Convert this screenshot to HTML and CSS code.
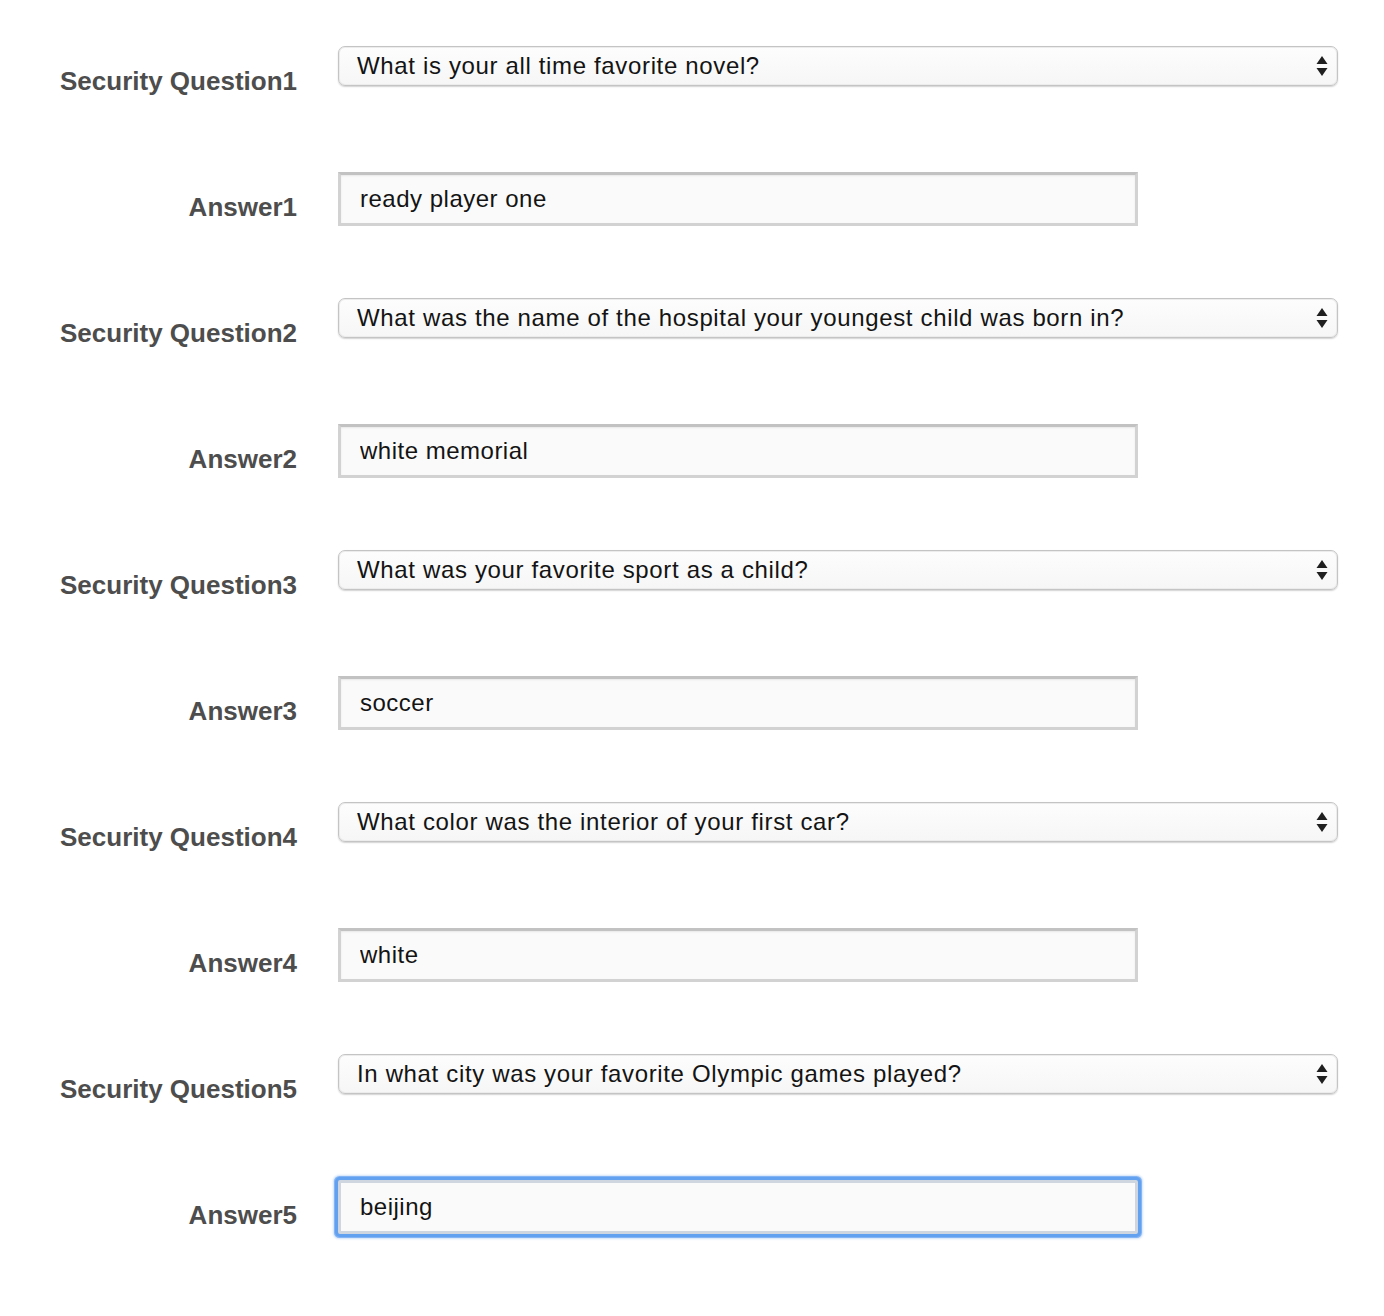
FILE: index.html
```html
<!DOCTYPE html>
<html>
<head>
<meta charset="utf-8">
<link rel="stylesheet" href="styles.css">
</head>
<body>
<form class="form">
  <div class="row">
    <label class="label">Security Question1</label>
    <div class="select-wrap">
      <select class="select"><option>What is your all time favorite novel?</option></select>
      <svg class="arrows" width="12" height="22" viewBox="0 0 12 22"><path d="M6 1 L11.5 9 L0.5 9 Z M0.5 13 L11.5 13 L6 21 Z" fill="#1f1f1f"/></svg>
    </div>
  </div>
  <div class="row">
    <label class="label">Answer1</label>
    <input class="input" type="text" value="ready player one">
  </div>
  <div class="row">
    <label class="label">Security Question2</label>
    <div class="select-wrap">
      <select class="select"><option>What was the name of the hospital your youngest child was born in?</option></select>
      <svg class="arrows" width="12" height="22" viewBox="0 0 12 22"><path d="M6 1 L11.5 9 L0.5 9 Z M0.5 13 L11.5 13 L6 21 Z" fill="#1f1f1f"/></svg>
    </div>
  </div>
  <div class="row">
    <label class="label">Answer2</label>
    <input class="input" type="text" value="white memorial">
  </div>
  <div class="row">
    <label class="label">Security Question3</label>
    <div class="select-wrap">
      <select class="select"><option>What was your favorite sport as a child?</option></select>
      <svg class="arrows" width="12" height="22" viewBox="0 0 12 22"><path d="M6 1 L11.5 9 L0.5 9 Z M0.5 13 L11.5 13 L6 21 Z" fill="#1f1f1f"/></svg>
    </div>
  </div>
  <div class="row">
    <label class="label">Answer3</label>
    <input class="input" type="text" value="soccer">
  </div>
  <div class="row">
    <label class="label">Security Question4</label>
    <div class="select-wrap">
      <select class="select"><option>What color was the interior of your first car?</option></select>
      <svg class="arrows" width="12" height="22" viewBox="0 0 12 22"><path d="M6 1 L11.5 9 L0.5 9 Z M0.5 13 L11.5 13 L6 21 Z" fill="#1f1f1f"/></svg>
    </div>
  </div>
  <div class="row">
    <label class="label">Answer4</label>
    <input class="input" type="text" value="white">
  </div>
  <div class="row">
    <label class="label">Security Question5</label>
    <div class="select-wrap">
      <select class="select"><option>In what city was your favorite Olympic games played?</option></select>
      <svg class="arrows" width="12" height="22" viewBox="0 0 12 22"><path d="M6 1 L11.5 9 L0.5 9 Z M0.5 13 L11.5 13 L6 21 Z" fill="#1f1f1f"/></svg>
    </div>
  </div>
  <div class="row">
    <label class="label">Answer5</label>
    <input class="input input-focus" type="text" value="beijing">
  </div>
</form>
</body>
</html>
```

FILE: styles.css
```css
html, body {
  margin: 0;
  padding: 0;
  background: #ffffff;
}

.form {
  padding-top: 46px;
  font-family: "Liberation Sans", Arial, sans-serif;
}

.row {
  display: grid;
  grid-template-columns: 297px auto;
  column-gap: 41px;
  align-items: start;
  height: 126px;
}

.label {
  text-align: right;
  font-weight: bold;
  font-size: 26px;
  line-height: 26px;
  color: #4d4d4d;
  margin-top: 22px;
}

.select-wrap {
  position: relative;
  width: 1000px;
  height: 40px;
}

.select {
  appearance: none;
  -webkit-appearance: none;
  box-sizing: border-box;
  width: 1000px;
  height: 40px;
  margin: 0;
  padding: 0 40px 0 18px;
  border: 1px solid #c4c4c4;
  border-radius: 7px;
  background: linear-gradient(#fdfdfd, #f6f6f6);
  box-shadow: 0 1px 1.5px rgba(0,0,0,0.18), inset 0 0 0 1px #ececec;
  font-family: "Liberation Sans", Arial, sans-serif;
  font-size: 24px;
  letter-spacing: 0.65px;
  color: #141414;
  line-height: 38px;
}

.arrows {
  position: absolute;
  right: 10px;
  top: 9px;
  pointer-events: none;
}

.input {
  box-sizing: border-box;
  width: 800px;
  height: 54px;
  margin: 0;
  padding: 0 0 0 19px;
  border: 3px solid #d2d2d2;
  border-top-color: #c2c2c2;
  border-radius: 0;
  background: #fbfafa;
  box-shadow: inset 0 1px 2px rgba(0,0,0,0.08);
  font-family: "Liberation Sans", Arial, sans-serif;
  font-size: 24px;
  letter-spacing: 0.5px;
  color: #141414;
  outline: none;
}

.input-focus {
  border-color: #cfd6df;
  box-shadow: 0 0 0 3px #62a0f0, 0 0 0 4px rgba(98,160,240,0.7), 0 0 2px 5px rgba(98,160,240,0.3);
  border-radius: 2px;
}
```
